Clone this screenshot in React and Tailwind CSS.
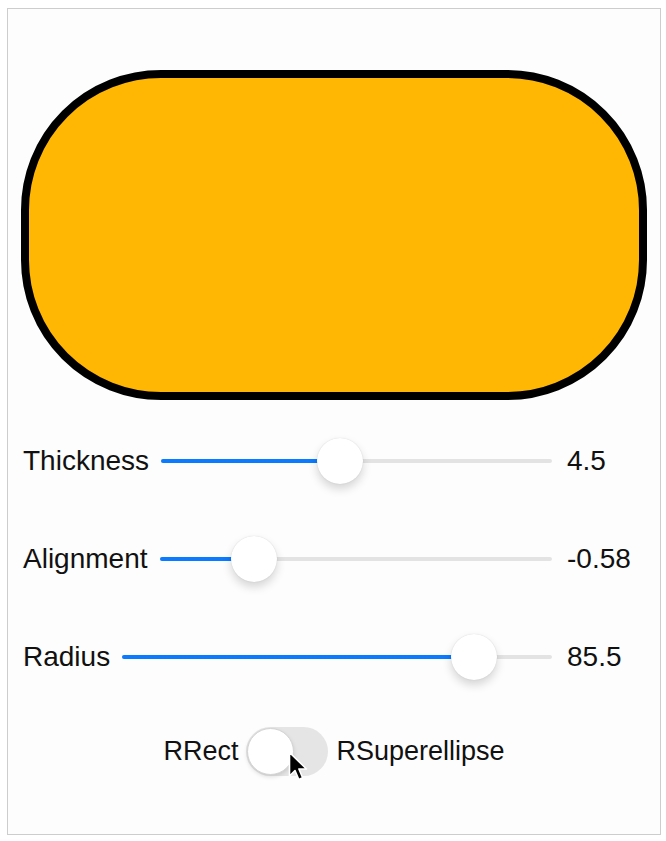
import React, { useState } from 'react';

const font = { fontFamily: '"Liberation Sans", Arial, sans-serif' };

const sliders = [
  { label: 'Thickness', value: '4.5', pos: 0.458 },
  { label: 'Alignment', value: '-0.58', pos: 0.242 },
  { label: 'Radius', value: '85.5', pos: 0.819 },
];

const Slider = ({ pos }) => {
  return (
    <div className="relative flex-1 h-[46px] flex items-center">
      <div className="w-full h-[4px] rounded-full bg-[#e3e3e3]" />
      <div
        className="absolute left-0 top-1/2 -translate-y-1/2 h-[4px] rounded-full bg-[#0a7aff]"
        style={{ width: `${pos * 100}%` }}
      />
      <div
        className="absolute top-0 w-[46px] h-[46px] -ml-[23px] rounded-full bg-white shadow-[0_5px_10px_rgba(0,0,0,0.16),0_0_1px_rgba(0,0,0,0.18)]"
        style={{ left: `${pos * 100}%` }}
      />
    </div>
  );
};

const Cursor = () => (
  <svg
    className="absolute left-[42px] top-[24px]"
    width="20"
    height="31"
    viewBox="0 0 20 31"
  >
    <path
      d="M1.5 1.5 L1.5 25 L7 19.5 L10.8 28.5 L14.6 26.8 L10.9 18 L18.5 18 Z"
      fill="#000"
      stroke="#fff"
      strokeWidth="1.6"
      strokeLinejoin="round"
    />
  </svg>
);

const App = () => {
  const [on, setOn] = useState(false);

  return (
    <div className="w-[666px] h-[841px] bg-white pt-[8px] pl-[7px]" style={font}>
      <div className="w-[654px] h-[827px] border border-[#cdcdcd] bg-[#fdfdfd] px-[13px] pt-[61px] text-[#111] text-[28px]">
        <div className="h-[330px] w-full rounded-[140px] border-[8px] border-black bg-[#ffb703]" />

        <div className="mt-[12px]">
          {sliders.map((s) => (
            <div key={s.label} className="h-[98px] flex items-center pl-[2px]">
              <span className="mr-[12px] leading-none">{s.label}</span>
              <Slider pos={s.pos} />
              <span className="w-[95px] pl-[15px] leading-none">{s.value}</span>
            </div>
          ))}
        </div>

        <div className="h-[90px] flex items-center justify-center text-[27px]">
          <span className="leading-none">RRect</span>
          <div className="relative mx-[8px]">
            <button
              onClick={() => setOn(!on)}
              className={`w-[82px] h-[49px] rounded-full p-[1px] flex ${on ? 'bg-[#34c759] justify-end' : 'bg-[#e5e5e5] justify-start'}`}
            >
              <span className="w-[47px] h-[47px] rounded-full bg-white border border-[#d4d4d4] shadow-[0_2px_4px_rgba(0,0,0,0.12)]" />
            </button>
            <Cursor />
          </div>
          <span className="leading-none">RSuperellipse</span>
        </div>
      </div>
    </div>
  );
};

export default App;
